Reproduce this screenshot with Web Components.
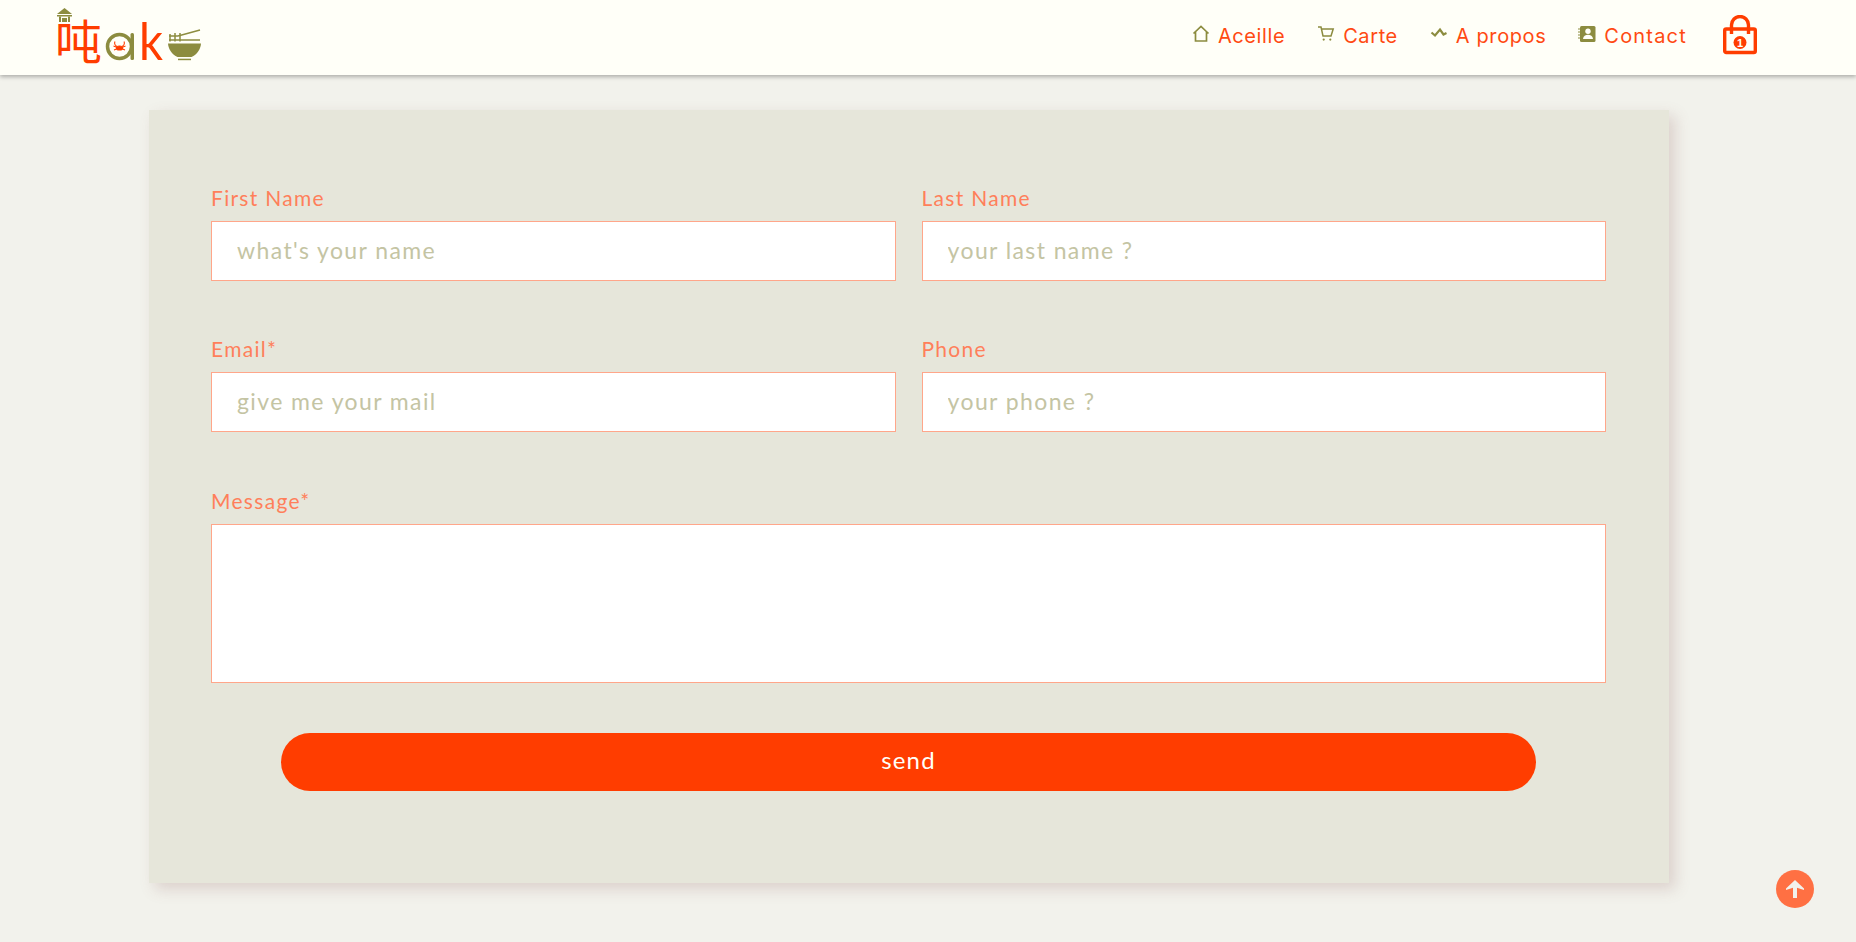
<!DOCTYPE html>
<html lang="fr">
<head>
<meta charset="utf-8">
<title>Contact</title>
<style>
	html { background: #f2f2ec; }
	body { margin: 0; min-height: 100vh; }
</style>
</head>
<body>
<site-header>
	<nav-link label="Aceille" icon="home"></nav-link>
	<nav-link label="Carte" icon="cart"></nav-link>
	<nav-link label="A propos" icon="zigzag"></nav-link>
	<nav-link label="Contact" icon="book" style="letter-spacing: 1.2px"></nav-link>
</site-header>
<contact-card>
	<form-field placeholder="what's your name">First Name</form-field>
	<form-field placeholder="your last name ?">Last Name</form-field>
	<form-field placeholder="give me your mail">Email*</form-field>
	<form-field placeholder="your phone ?">Phone</form-field>
	<form-field class="wide message" multiline>Message*</form-field>
	<send-button class="wide">send</send-button>
</contact-card>
<scroll-top></scroll-top>

<script>
const icons = {
	home: `<svg width="18" height="18" viewBox="0 0 18 18" fill="none" stroke="#8c8c3f" stroke-width="1.700"><path d="M1.500 8.500 9 1.500l7.500 7M3.500 7v9h11V7"/></svg>`,
	cart: `<svg width="18" height="18" viewBox="0 0 18 18" fill="none" stroke="#8c8c3f" stroke-width="1.500"><path d="M1 2h3l2 9h8l2.200-7H4.600"/><circle cx="6.700" cy="14.600" r="1.100" fill="#8c8c3f" stroke="none"/><circle cx="13.300" cy="14.600" r="1.100" fill="#8c8c3f" stroke="none"/></svg>`,
	zigzag: `<svg width="18" height="18" viewBox="0 0 18 18" fill="none" stroke="#8c8c3f" stroke-width="2.200"><path d="M1.500 7.500 5 10.500 10 4.500 13.500 9.500 16.500 8"/></svg>`,
	book: `<svg width="18" height="18" viewBox="0 0 18 18"><rect x="2" y="1" width="15.500" height="16" rx="1.500" fill="#8c8c3f"/><path d="M0 4h3M0 7h3M0 10h3M0 13h3" stroke="#8c8c3f" stroke-width="1"/><circle cx="10" cy="6.200" r="2.700" fill="#fffff8"/><path d="M5 14c.3-3 2.400-4.300 5-4.300s4.700 1.300 5 4.300z" fill="#fffff8"/></svg>`
};

class SiteHeader extends HTMLElement {
	constructor() {
		super();
		const shadowRoot = this.attachShadow({ mode: 'open' });
		shadowRoot.innerHTML = `
			<style>
				:host {
					align-items: center;
					background: #fffff8;
					box-shadow: 0 2px 4px rgba(0, 0, 0, .28);
					box-sizing: border-box;
					display: flex;
					height: 75px;
					justify-content: space-between;
					padding: 0 98px 0 50px;
					position: relative;
				}
				nav {
					align-items: center;
					display: flex;
					gap: 32px;
				}
				.logo { display: block; }
				.bag {
					display: block;
					margin: 0 0 5px 3px;
				}
				svg text { font-family: "Liberation Sans", sans-serif; }
			</style>
			<svg class="logo" width="160" height="75" viewBox="50 0 160 75" aria-label="logo">
				<g fill="#8c8c3f">
					<path d="M64.500 8 72 14H57z"/>
					<rect x="57" y="15" width="15" height="1.500"/>
					<path d="M59 16.500h2V22h-2zM68 16.500h2V22h-2zM62 18h5v4h-5z"/>
				</g>
				<text x="55" y="59" font-size="47" fill="#ff3d00" style="font-family:'Noto Sans CJK SC',sans-serif;font-weight:400">吨</text>
				<circle cx="119.500" cy="46.500" r="12" fill="none" stroke="#8c8c3f" stroke-width="3.500"/>
				<rect x="130.500" y="33" width="3.500" height="27" rx="1.500" fill="#8c8c3f"/>
				<g stroke="#ff3d00" stroke-width="1.100" fill="none">
					<ellipse cx="119.500" cy="48" rx="3.200" ry="2" fill="#ff3d00"/>
					<path d="M115 41.500c-1 2 0 4 2 5M124 41.500c1 2 0 4-2 5M113.500 46l2.500 1M125.500 46l-2.500 1M114 50l2.500-1M125 50l-2.500-1"/>
				</g>
				<text x="139" y="60" font-size="52" fill="#ff3d00" textLength="24" lengthAdjust="spacingAndGlyphs" style="font-family:Lato,sans-serif;font-weight:400">k</text>
				<path d="M168 43.500h33c-.5 6-4 11-9.500 13.500h-14c-5.500-2.500-9-7.500-9.500-13.500z" fill="#8c8c3f"/>
				<rect x="178" y="58.700" width="13" height="1.500" fill="#8c8c3f"/>
				<g stroke="#8c8c3f" stroke-width="1.500" fill="none">
					<path d="M169 36h9M169 40h31M178 36l22-6"/>
					<path d="M170 34v7.500M175 33v8.500M180 33v8.500"/>
				</g>
			</svg>
			<nav>
				<slot></slot>
				<svg class="bag" width="36" height="40" viewBox="0 0 36 40" aria-label="panier">
					<path d="M9.500 19V10a8.500 8.500 0 0 1 17 0v9" fill="none" stroke="#ff3d00" stroke-width="3.400"/>
					<rect x="2.700" y="14" width="30.600" height="23.500" rx="1.500" fill="none" stroke="#ff3d00" stroke-width="3.400"/>
					<circle cx="18" cy="27.500" r="6.500" fill="#ff3d00"/>
					<text x="18" y="31.500" font-size="11" font-weight="700" fill="#fffff8" text-anchor="middle">1</text>
				</svg>
			</nav>
		`;
	}
}

class NavLink extends HTMLElement {
	constructor() {
		super();
		const shadowRoot = this.attachShadow({ mode: 'open' });
		shadowRoot.innerHTML = `
			<style>
				:host {
					align-items: center;
					color: #ff4a12;
					display: flex;
					font-family: Inter, "Noto Sans", sans-serif;
					font-size: 20px;
					font-weight: 400;
					gap: 8px;
					letter-spacing: .6px;
					margin-bottom: 4px;
				}
				.icon {
					display: block;
					height: 18px;
					margin-top: -5px;
				}
			</style>
			<span class="icon">${icons[this.getAttribute('icon')]}</span>
			<span>${this.getAttribute('label')}</span>
		`;
	}
}

class ContactCard extends HTMLElement {
	constructor() {
		super();
		const shadowRoot = this.attachShadow({ mode: 'open' });
		shadowRoot.innerHTML = `
			<style>
				:host {
					background: #e6e6da;
					box-shadow: 6px 6px 14px rgba(140, 90, 90, .22);
					box-sizing: border-box;
					column-gap: 26px;
					display: grid;
					grid-template-columns: 1fr 1fr;
					margin: 35px 0 0 149px;
					padding: 77px 63px 92px 62px;
					row-gap: 57px;
					width: 1520px;
				}
				::slotted(.wide) { grid-column: 1 / -1; }
				::slotted(.message) { margin-top: 1px; }
			</style>
			<slot></slot>
		`;
	}
}

class FormField extends HTMLElement {
	constructor() {
		super();
		const shadowRoot = this.attachShadow({ mode: 'open' });
		const placeholder = this.getAttribute('placeholder') || '';
		const control = this.hasAttribute('multiline')
			? `<textarea></textarea>`
			: `<input type="text" placeholder="${placeholder}">`;
		shadowRoot.innerHTML = `
			<style>
				:host {
					display: block;
					font-family: Lato, "Noto Sans", sans-serif;
				}
				label {
					color: #ff7f5a;
					display: block;
					font-size: 21px;
					letter-spacing: 1.300px;
					line-height: 22px;
					margin-bottom: 12px;
				}
				input, textarea {
					background: #fff;
					border: 1px solid #ffa68a;
					box-sizing: border-box;
					display: block;
					font: inherit;
					font-size: 23px;
					letter-spacing: 1.400px;
					outline: none;
					padding: 0 25px 3px;
					resize: none;
					width: 100%;
				}
				input { height: 60px; }
				textarea { height: 159px; }
				::placeholder {
					color: #c4c4a3;
					opacity: 1;
				}
			</style>
			<label><slot></slot></label>
			${control}
		`;
	}
}

class SendButton extends HTMLElement {
	constructor() {
		super();
		const shadowRoot = this.attachShadow({ mode: 'open' });
		shadowRoot.innerHTML = `
			<style>
				:host {
					display: block;
					margin-top: -7px;
					padding: 0 70px;
				}
				button {
					background: #ff3d00;
					border: none;
					border-radius: 29px;
					color: #fffff8;
					display: block;
					font-family: Lato, "Noto Sans", sans-serif;
					font-size: 24px;
					height: 58px;
					letter-spacing: 1.200px;
					padding: 0 0 6px;
					width: 100%;
				}
			</style>
			<button type="button"><slot></slot></button>
		`;
	}
}

class ScrollTop extends HTMLElement {
	constructor() {
		super();
		const shadowRoot = this.attachShadow({ mode: 'open' });
		shadowRoot.innerHTML = `
			<style>
				:host {
					align-items: center;
					background: #ff7043;
					border-radius: 50%;
					bottom: 34px;
					display: flex;
					height: 38px;
					justify-content: center;
					position: fixed;
					right: 42px;
					width: 38px;
				}
			</style>
			<svg width="18" height="18" viewBox="0 0 18 18" fill="#f2f2ec"><path d="M9 0 18 8.500V10L11 7.700V18H7V7.700L0 10V8.500z"/></svg>
		`;
	}
}

customElements.define('site-header', SiteHeader);
customElements.define('nav-link', NavLink);
customElements.define('contact-card', ContactCard);
customElements.define('form-field', FormField);
customElements.define('send-button', SendButton);
customElements.define('scroll-top', ScrollTop);
</script>
</body>
</html>
